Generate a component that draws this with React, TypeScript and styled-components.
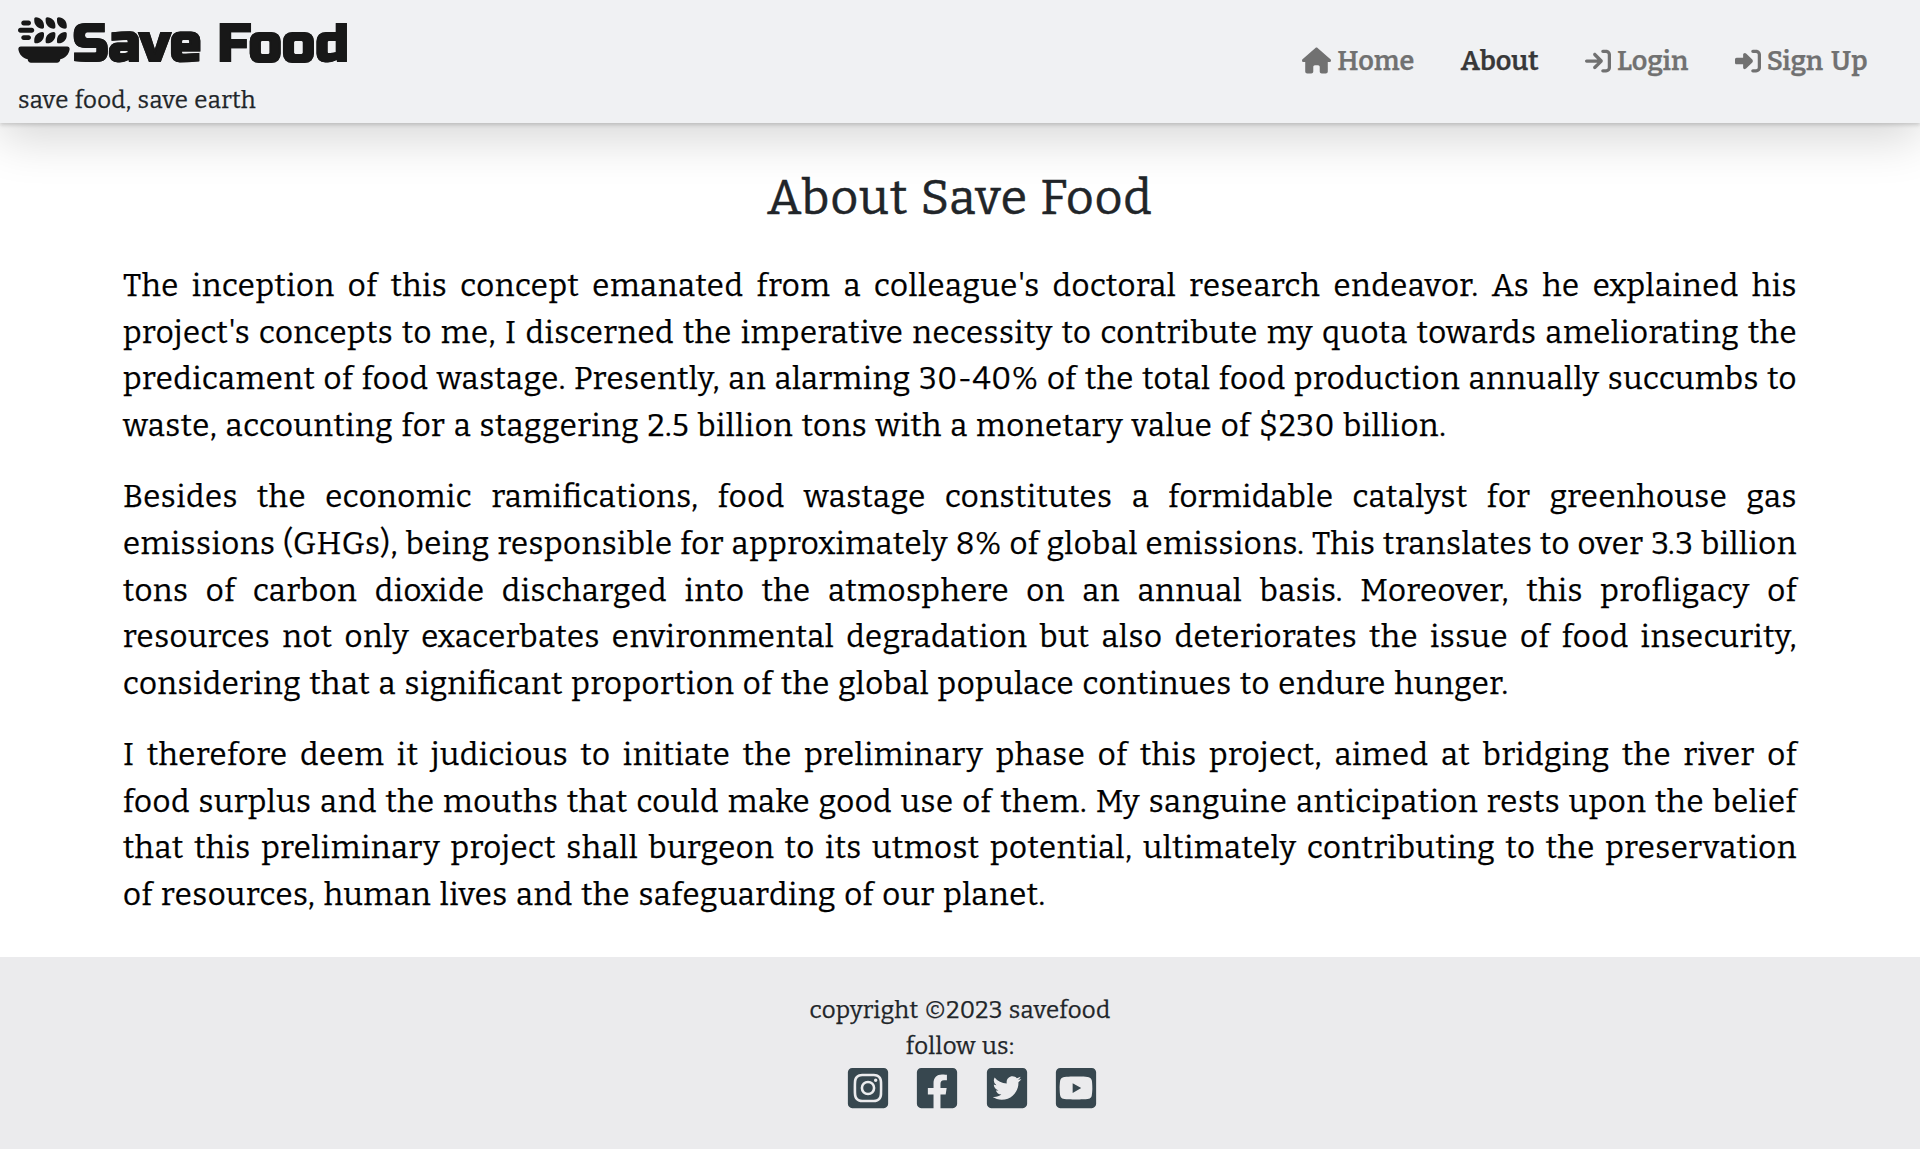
import React from "react";
import styled, { createGlobalStyle } from "styled-components";
import {
  FaHouse,
  FaArrowRightToBracket,
  FaRightToBracket,
  FaPlateWheat,
} from "react-icons/fa6";
import {
  FaInstagramSquare,
  FaFacebookSquare,
  FaTwitterSquare,
  FaYoutubeSquare,
} from "react-icons/fa";

const GlobalStyle = createGlobalStyle`
  *, *::before, *::after { box-sizing: border-box; }
  body {
    margin: 0;
    background: #fff;
    color: #212529;
    font-family: Bitter, "Noto Serif", "DejaVu Serif Condensed", "DejaVu Serif", serif;
    font-size: 24px;
    font-weight: 400;
    font-feature-settings: "liga" 1;
    line-height: 1.5;
    letter-spacing: 0.013em;
    word-spacing: 0.04em;
    -webkit-text-stroke-width: 0.25px;
  }
`;

const Page = styled.div`
  display: flex;
  flex-direction: column;
  height: 1149px;
  overflow: hidden;
`;

const Header = styled.header`
  position: relative;
  display: flex;
  justify-content: space-between;
  height: 123px;
  padding: 0 52.5px 0 18px;
  background: #f0f1f3;
  box-shadow: 0 2px 4px rgba(0, 0, 0, 0.16), 0 16px 48px rgba(0, 0, 0, 0.16);
`;

const Brand = styled.div`
  display: flex;
  flex-direction: column;
  padding-top: 15px;
`;

const Logo = styled.div`
  display: flex;
  align-items: center;
  height: 50px;
  color: #181818;
`;

const Wordmark = styled.span`
  margin: 7px 0 0 3px;
  font-family: "Russo One", Inter, "Liberation Sans", sans-serif;
  font-weight: 900;
  font-size: 53px;
  line-height: 50px;
  letter-spacing: 0;
  word-spacing: 0;
  white-space: nowrap;
`;

const Tagline = styled.span`
  margin-top: 17px;
  line-height: 36px;
`;

const Nav = styled.nav`
  display: flex;
  align-items: center;
  gap: 46.5px;
`;

const NavLink = styled.a<{ $active?: boolean }>`
  display: flex;
  align-items: center;
  gap: 6px;
  font-size: 27px;
  font-weight: 600;
  letter-spacing: 0;
  word-spacing: 3px;
  color: ${(p) => (p.$active ? "#383838" : "#717171")};

  svg {
    margin-bottom: 2px;
  }
`;

const Main = styled.main`
  flex: 1;
  padding: 46px 123px 0;
`;

const Title = styled.h2`
  margin: 0 0 36px;
  font-size: 48px;
  font-weight: 400;
  line-height: 58px;
  letter-spacing: 0.022em;
  word-spacing: 0.03em;
  text-align: center;
  -webkit-text-stroke-width: 0.5px;
`;

const Paragraph = styled.p`
  margin: 0 0 24.3px;
  color: #000;
  font-size: 31.1px;
  line-height: 46.7px;
`;

const Line = styled.span<{ $last?: boolean }>`
  display: block;
  letter-spacing: 0.55px;
  word-spacing: ${(p) => (p.$last ? "1.55px" : "0")};
  white-space: nowrap;
  text-align: ${(p) => (p.$last ? "left" : "justify")};
  text-align-last: ${(p) => (p.$last ? "left" : "justify")};
`;

const Footer = styled.footer`
  display: flex;
  flex-direction: column;
  align-items: center;
  height: 192px;
  padding-top: 35px;
  background: #ebebed;
`;

const Socials = styled.div`
  display: flex;
  gap: 23.5px;
  margin: 1px 0 0 24px;
  font-size: 46px;
  color: #37474f;
`;

const paragraphs = [
  [
    "The inception of this concept emanated from a colleague's doctoral research endeavor. As he explained his",
    "project's concepts to me, I discerned the imperative necessity to contribute my quota towards ameliorating the",
    "predicament of food wastage. Presently, an alarming 30-40% of the total food production annually succumbs to",
    "waste, accounting for a staggering 2.5 billion tons with a monetary value of $230 billion.",
  ],
  [
    "Besides the economic ramifications, food wastage constitutes a formidable catalyst for greenhouse gas",
    "emissions (GHGs), being responsible for approximately 8% of global emissions. This translates to over 3.3 billion",
    "tons of carbon dioxide discharged into the atmosphere on an annual basis. Moreover, this profligacy of",
    "resources not only exacerbates environmental degradation but also deteriorates the issue of food insecurity,",
    "considering that a significant proportion of the global populace continues to endure hunger.",
  ],
  [
    "I therefore deem it judicious to initiate the preliminary phase of this project, aimed at bridging the river of",
    "food surplus and the mouths that could make good use of them. My sanguine anticipation rests upon the belief",
    "that this preliminary project shall burgeon to its utmost potential, ultimately contributing to the preservation",
    "of resources, human lives and the safeguarding of our planet.",
  ],
];

export default function App() {
  return (
    <Page>
      <GlobalStyle />
      <Header>
        <Brand>
          <Logo>
            <FaPlateWheat size={52} />
            <Wordmark>Save Food</Wordmark>
          </Logo>
          <Tagline>save food, save earth</Tagline>
        </Brand>
        <Nav>
          <NavLink><FaHouse size={29} />Home</NavLink>
          <NavLink $active>About</NavLink>
          <NavLink><FaArrowRightToBracket size={26} />Login</NavLink>
          <NavLink><FaRightToBracket size={26} />Sign Up</NavLink>
        </Nav>
      </Header>
      <Main>
        <Title>About Save Food</Title>
        {paragraphs.map((lines) => (
          <Paragraph key={lines[0]}>
            {lines.map((line, i) => (
              <Line key={line} $last={i === lines.length - 1}>{line}</Line>
            ))}
          </Paragraph>
        ))}
      </Main>
      <Footer>
        <span>copyright ©2023 savefood</span>
        <span>follow us:</span>
        <Socials>
          <FaInstagramSquare />
          <FaFacebookSquare />
          <FaTwitterSquare />
          <FaYoutubeSquare />
        </Socials>
      </Footer>
    </Page>
  );
}
